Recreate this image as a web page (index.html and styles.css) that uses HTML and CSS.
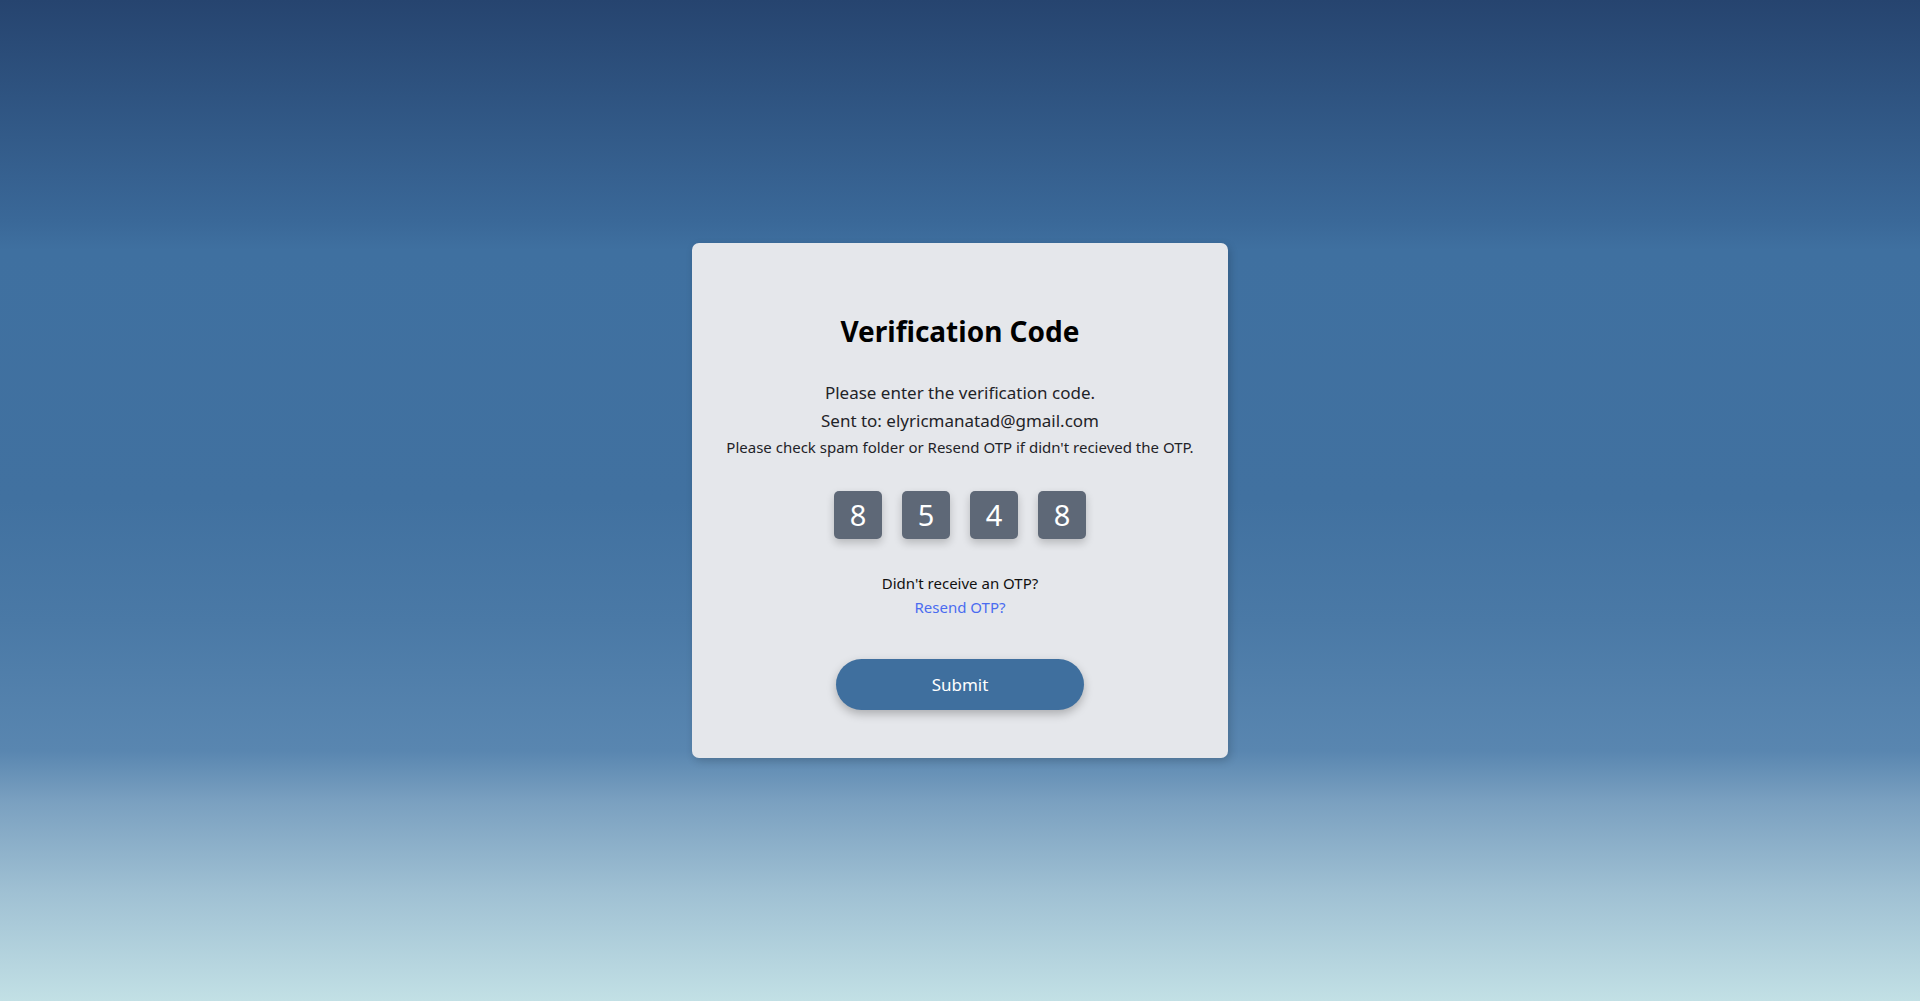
FILE: index.html
```html
<!DOCTYPE html>
<html lang="en">
<head>
<meta charset="utf-8">
<title>Verification Code</title>
<link rel="stylesheet" href="styles.css">
</head>
<body>
<main class="page">
  <section class="card">
    <h2 class="title">Verification Code</h2>
    <p class="line">Please enter the verification code.</p>
    <p class="line">Sent to: elyricmanatad@gmail.com</p>
    <p class="note">Please check spam folder or Resend OTP if didn't recieved the OTP.</p>
    <div class="otp">
      <div class="digit">8</div>
      <div class="digit">5</div>
      <div class="digit">4</div>
      <div class="digit">8</div>
    </div>
    <p class="ask">Didn't receive an OTP?</p>
    <a class="resend" href="#">Resend OTP?</a>
    <button class="submit" type="button">Submit</button>
  </section>
</main>
</body>
</html>
```
FILE: styles.css
```css
* { box-sizing: border-box; }
html, body { margin: 0; padding: 0; height: 100%; }
body {
  font-family: "Noto Sans", "Open Sans", sans-serif;
  background: linear-gradient(to bottom,
    #26446f 0%,
    #3a6898 22%,
    #3f70a0 25%,
    #4171a0 50%,
    #4a79a6 62%,
    #5986b0 75%,
    #7aa0c0 80%,
    #9fc0d3 89%,
    #c2e0e5 100%);
}
.page {
  height: 1001px;
  display: flex;
  align-items: center;
  justify-content: center;
}
.card {
  width: 536px;
  height: 515px;
  background: #e5e7eb;
  border-radius: 7px;
  box-shadow: 2px 3px 8px rgba(0, 0, 0, 0.18);
  padding: 68px 16px 0;
  display: flex;
  flex-direction: column;
  align-items: center;
  text-align: center;
  color: #1f2328;
}
.title {
  margin: 0;
  font-size: 28px;
  line-height: 40px;
  font-weight: 700;
  color: #000;
}
.line {
  margin: 0;
  font-size: 17px;
  line-height: 28px;
}
.title + .line { margin-top: 28px; }
.note {
  margin: 0;
  font-size: 15px;
  line-height: 24px;
  white-space: nowrap;
}
.otp {
  margin-top: 32px;
  display: flex;
  gap: 20px;
}
.digit {
  width: 48px;
  height: 48px;
  border-radius: 5px;
  background: #5e6877;
  color: #fff;
  font-size: 29px;
  line-height: 48px;
  box-shadow: 0 4px 8px rgba(0, 0, 0, 0.2);
}
.ask {
  margin: 32px 0 0;
  font-size: 15px;
  line-height: 24px;
  color: #111;
}
.resend {
  font-size: 15px;
  line-height: 24px;
  color: #4a6cf0;
  text-decoration: none;
}
.submit {
  margin-top: 40px;
  width: 248px;
  height: 51px;
  border: none;
  border-radius: 26px;
  background: #3f6f9e;
  color: #fff;
  font-family: inherit;
  font-size: 17px;
  box-shadow: 0 4px 10px rgba(0, 0, 0, 0.25);
  cursor: pointer;
}
```
